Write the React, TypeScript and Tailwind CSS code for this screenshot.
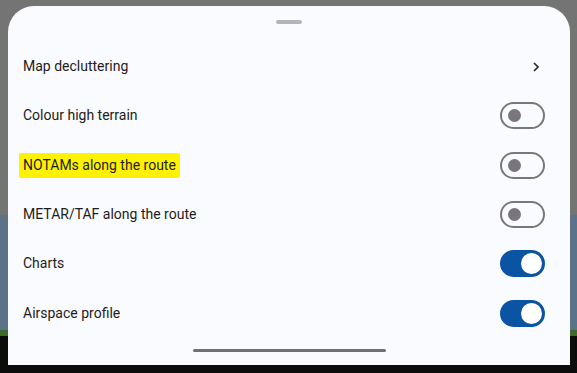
import React, { useState } from "react";

type Row = {
  label: string;
  kind: "link" | "toggle";
  on?: boolean;
  highlight?: boolean;
};

const rows: Row[] = [
  { label: "Map decluttering", kind: "link" },
  { label: "Colour high terrain", kind: "toggle", on: false },
  { label: "NOTAMs along the route", kind: "toggle", on: false, highlight: true },
  { label: "METAR/TAF along the route", kind: "toggle", on: false },
  { label: "Charts", kind: "toggle", on: true },
  { label: "Airspace profile", kind: "toggle", on: true },
];

const Toggle = ({ on, onClick }: { on: boolean; onClick: () => void }) =>
  on ? (
    <button
      onClick={onClick}
      className="w-[45px] h-[27px] rounded-full bg-[#0b53a3] flex items-center justify-end pr-[3px]"
    >
      <span className="w-[21px] h-[21px] rounded-full bg-white" />
    </button>
  ) : (
    <button
      onClick={onClick}
      className="w-[45px] h-[27px] rounded-full border-2 border-[#79767d] flex items-center pl-[6px]"
    >
      <span className="w-[13px] h-[13px] rounded-full bg-[#79767d]" />
    </button>
  );

export default function App() {
  const [state, setState] = useState(rows.map((r) => !!r.on));

  return (
    <div
      className="relative w-[577px] h-[373px] overflow-hidden"
      style={{ fontFamily: "Roboto, 'Noto Sans', sans-serif" }}
    >
      {/* map behind the sheet */}
      <div className="flex flex-col h-full">
        <div className="h-[215px] bg-[#747474]" />
        <div className="h-[115px] bg-[#5b7289]" />
        <div className="h-[6px] bg-[#3f6a2c]" />
        <div className="flex-1 bg-[#0c0c0c]" />
      </div>

      {/* bottom sheet */}
      <div className="absolute left-[8px] top-[6px] w-[562px] h-[359px] rounded-t-[26px] bg-[#fafbfe] flex flex-col">
        <div className="flex justify-center pt-[14px]">
          <div className="w-[26px] h-[4px] rounded-full bg-[#b4b4bb]" />
        </div>
        <div className="mt-[18px] flex flex-col">
          {rows.map((r, i) => (
            <div
              key={r.label}
              className="h-[49.3px] flex items-center justify-between pl-[15px] pr-[25px] text-[14px] text-[#1e1c21]"
            >
              <span
                className={
                  r.highlight
                    ? "bg-[#fff200] -ml-[4px] px-[4px] py-[2px] rounded-[2px]"
                    : ""
                }
              >
                {r.label}
              </span>
              {r.kind === "link" ? (
                <svg
                  width="16"
                  height="16"
                  viewBox="0 0 24 24"
                  className="mr-[1px]"
                  fill="none"
                  stroke="#2a2a30"
                  strokeWidth="2.6"
                >
                  <path d="M9 6l6 6-6 6" />
                </svg>
              ) : (
                <Toggle
                  on={state[i]}
                  onClick={() =>
                    setState((s) => s.map((v, j) => (j === i ? !v : v)))
                  }
                />
              )}
            </div>
          ))}
        </div>
        <div className="flex justify-center mt-[11px]">
          <div className="w-[193px] h-[3px] rounded-full bg-[#717171]" />
        </div>
      </div>
    </div>
  );
}
